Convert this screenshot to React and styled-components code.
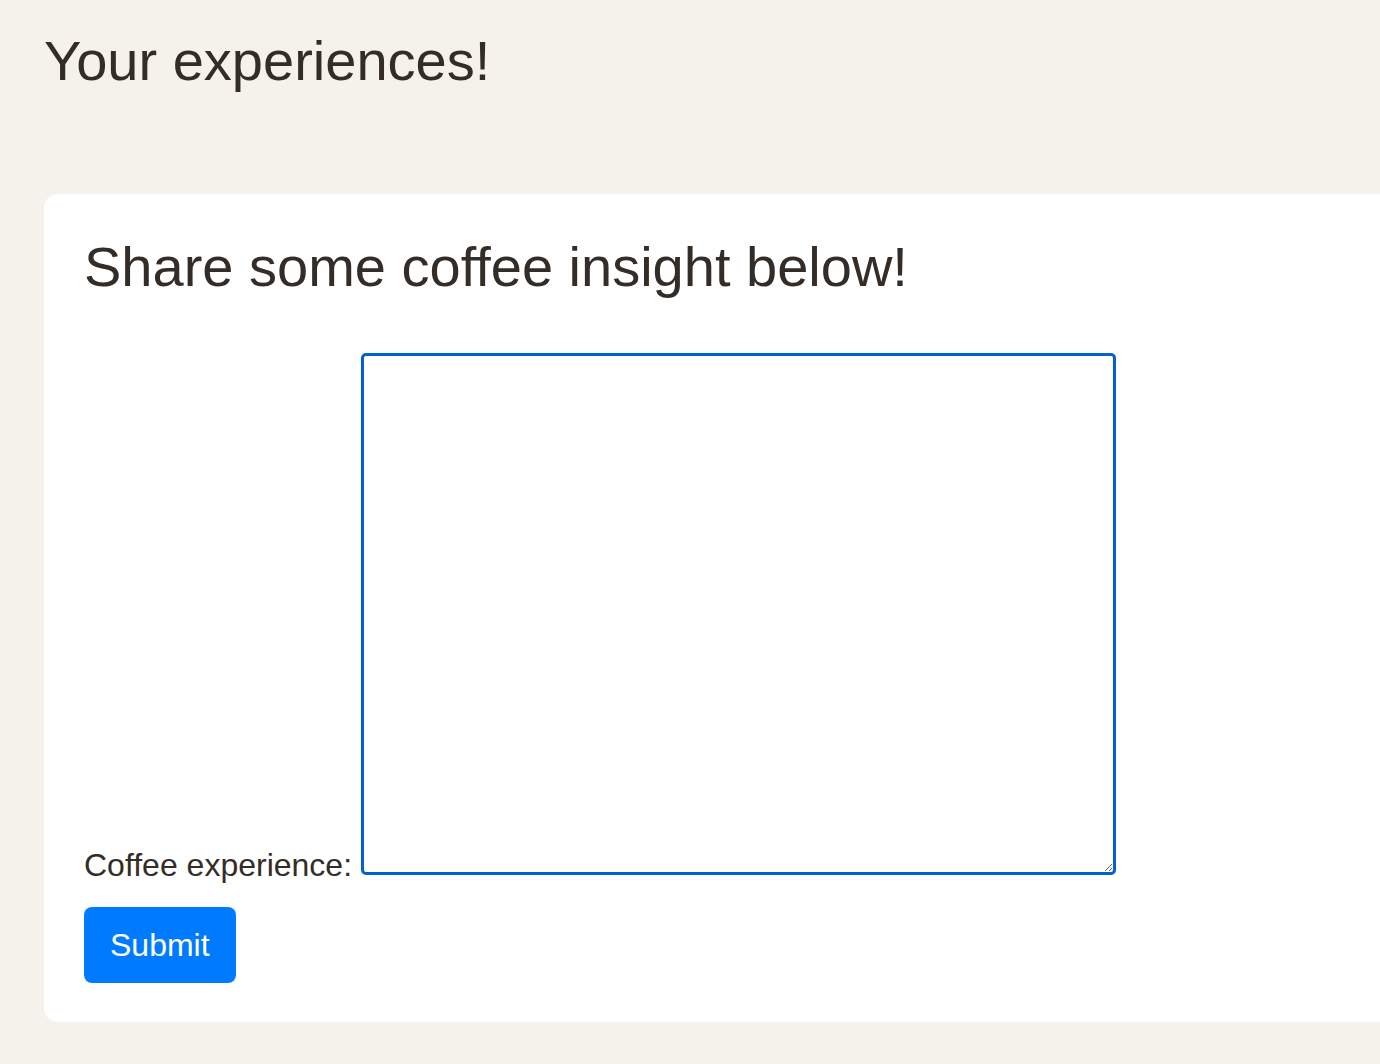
import styled, { createGlobalStyle } from "styled-components";

const GlobalStyle = createGlobalStyle`
  html, body {
    margin: 0;
    padding: 0;
    overflow-x: hidden;
    background-color: #f5f2eb;
  }
  body {
    font-family: "Liberation Sans", Arial, Helvetica, sans-serif;
    color: #342d27;
  }
`;

const Page = styled.div`
  min-height: 1064px;
  padding: 29px 0 40px 44px;
  box-sizing: border-box;
`;

const Title = styled.h1`
  margin: 0;
  font-size: 56px;
  font-weight: 400;
  line-height: 64px;
`;

const Card = styled.section`
  margin-top: 101px;
  width: 1400px;
  box-sizing: border-box;
  background-color: #ffffff;
  border-radius: 14px;
  padding: 41px 40px 39px;
`;

const CardTitle = styled.h2`
  margin: 0 0 54px;
  font-size: 56px;
  font-weight: 400;
  line-height: 64px;
`;

const Form = styled.form`
  display: flex;
  flex-direction: column;
  align-items: flex-start;
`;

const Row = styled.div`
  display: flex;
  align-items: flex-end;
  gap: 9px;
`;

const Label = styled.label`
  font-size: 32px;
  line-height: 32px;
  margin-bottom: -6px;
`;

const TextArea = styled.textarea`
  width: 755px;
  height: 522px;
  box-sizing: border-box;
  border: 3px solid #0061d0;
  border-radius: 5px;
  outline: none;
  background: #ffffff;
  font-family: inherit;
  font-size: 16px;
  padding: 4px;
`;

const SubmitButton = styled.button`
  margin-top: 32px;
  height: 76px;
  padding: 0 26px;
  border: none;
  border-radius: 8px;
  background-color: #007bff;
  color: #ffffff;
  font-family: inherit;
  font-size: 32px;
  cursor: pointer;
`;

export default function App() {
  return (
    <>
      <GlobalStyle />
      <Page>
        <Title>Your experiences!</Title>
        <Card>
          <CardTitle>Share some coffee insight below!</CardTitle>
          <Form onSubmit={(e) => e.preventDefault()}>
            <Row>
              <Label htmlFor="experience">Coffee experience:</Label>
              <TextArea id="experience" />
            </Row>
            <SubmitButton type="submit">Submit</SubmitButton>
          </Form>
        </Card>
      </Page>
    </>
  );
}
